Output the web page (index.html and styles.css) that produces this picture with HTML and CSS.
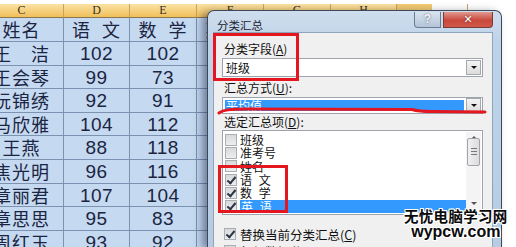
FILE: index.html
```html
<!DOCTYPE html>
<html lang="zh">
<head>
<meta charset="utf-8">
<link rel="stylesheet" href="styles.css">
</head>
<body>
<div class="hdr">
  <div class="hc w84">C</div><div class="hc w66">D</div><div class="hc w67">E</div><div class="hc w67">F</div><div class="hc w67">G</div><div class="hc w66">H</div><div class="hc fade w71"></div><div class="hc blank w60"></div>
</div>
<div class="sheet">
  <div class="c cn">姓名</div><div class="c cn sp">语 文</div><div class="c cn sp">数 学</div><div class="c cn sp">英 语</div><div class="c"></div>
  <div class="c cn">王　洁</div><div class="c">102</div><div class="c">102</div><div class="c"></div><div class="c"></div>
  <div class="c cn">王会琴</div><div class="c">99</div><div class="c">73</div><div class="c"></div><div class="c"></div>
  <div class="c cn">阮锦绣</div><div class="c">92</div><div class="c">91</div><div class="c"></div><div class="c"></div>
  <div class="c cn">马欣雅</div><div class="c">104</div><div class="c">112</div><div class="c"></div><div class="c"></div>
  <div class="c cn">王燕</div><div class="c">88</div><div class="c">118</div><div class="c"></div><div class="c"></div>
  <div class="c cn">焦光明</div><div class="c">96</div><div class="c">116</div><div class="c"></div><div class="c"></div>
  <div class="c cn">章丽君</div><div class="c">107</div><div class="c">104</div><div class="c"></div><div class="c"></div>
  <div class="c cn">章思思</div><div class="c">95</div><div class="c">83</div><div class="c"></div><div class="c"></div>
  <div class="c cn">周红玉</div><div class="c">93</div><div class="c">92</div><div class="c"></div><div class="c"></div>
</div>

<div class="dlg">
  <div class="titlebar">
    <span class="title">分类汇总</span>
    <div class="btns"><div class="help">?</div><div class="close">✕</div></div>
  </div>
  <div class="client">
    <div class="lbl">分类字段(<u>A</u>)</div>
    <div class="combo"><span class="val">班级</span><span class="dd"></span></div>
    <div class="lbl l2">汇总方式(<u>U</u>):</div>
    <div class="combo c2"><span class="val sel">平均值</span><span class="dd"></span></div>
    <div class="lbl l3">选定汇总项(<u>D</u>):</div>
    <div class="list">
      <div class="items">
        <div class="item"><span class="cb"></span><span>班级</span></div>
        <div class="item"><span class="cb"></span><span>准考号</span></div>
        <div class="item"><span class="cb"></span><span>姓名</span></div>
        <div class="item"><span class="cb on"></span><span>语 文</span></div>
        <div class="item"><span class="cb on"></span><span>数 学</span></div>
        <div class="item"><span class="cb on"></span><span class="hl">英 语</span></div>
      </div>
      <div class="sb"><span class="up"></span><span class="thumb"><i></i><i></i><i></i></span><span class="down"></span></div>
    </div>
    <div class="opt"><span class="cb on"></span><span>替换当前分类汇总(<u>C</u>)</span></div>
    <div class="opt"><span class="cb"></span><span>每组数据分页(<u>P</u>)</span></div>
  </div>
  <div class="mark m1"></div>
  <svg class="redline" width="270" height="10" viewBox="0 0 270 10"><path d="M2 6 C 6 3, 12 2, 30 2 L 195 2.5 C 200 4, 205 4.5, 215 4.5 L 268 5" fill="none" stroke="#e4161f" stroke-width="3" stroke-linecap="round"/></svg>
  <div class="mark m2"></div>
</div>

<div class="wm">
  <div class="wm1">无忧电脑学习网</div>
  <div class="wm2">wypcw.com</div>
</div>
</body>
</html>
```
FILE: styles.css
```css
* { box-sizing: border-box; margin: 0; padding: 0; }
html, body { width: 516px; height: 247px; overflow: hidden; background: #fff; }
body { position: relative; font-family: "Noto Sans CJK SC", sans-serif; }

.hdr { display: flex; margin-left: -20px; margin-top: 4px; height: 14px; }
.hc { flex: none; height: 14px; background: linear-gradient(#fbe2a4, #f0bf5a); border-right: 1px solid #c8a45a; border-bottom: 1px solid #8a784c; font: 12px/13px "Liberation Serif", serif; color: #3a3020; text-align: center; }
.hc.fade { background: linear-gradient(to right, #f3ca72 0 35px, #fff 35px); border-bottom-color: transparent; }
.hc.blank { background: #fff; border: 0; }
.w84 { width: 84px; } .w66 { width: 66px; } .w67 { width: 67px; } .w71 { width: 71px; } .w60 { width: 60px; }

.sheet { display: grid; grid-template-columns: 84px 66px 67px 67px 67px; grid-template-rows: 24px repeat(9, 23.6px); margin-left: -20px; width: 351px; }
.c { background: #c5d9f1; border-right: 1px solid #7d91b1; border-bottom: 1px solid #7d91b1; color: #1b2542; font: 19px/23px "Liberation Sans Narrow", "Liberation Sans", sans-serif; letter-spacing: 0.4px; text-align: center; white-space: nowrap; overflow: hidden; }
.c.cn { font-family: "Noto Sans CJK SC", sans-serif; font-size: 18px; letter-spacing: 1px; }
.c.sp { word-spacing: 6px; }

.dlg { position: absolute; left: 207px; top: 10px; width: 295px; height: 237px; border: 1px solid #3d4858; border-bottom: 0; border-radius: 7px 7px 0 0; background: linear-gradient(180deg, #cfdeee 0, #bfd3e8 30px, #b7cce3 100%); box-shadow: -5px 2px 8px rgba(10, 20, 50, 0.45); padding: 0 8px 0 5px; display: flex; flex-direction: column; }
.titlebar { height: 21px; flex: none; display: flex; align-items: flex-start; justify-content: space-between; }
.title { font-size: 11.5px; line-height: 14px; color: #1d232c; margin: 7px 0 0 4px; }
.btns { display: flex; gap: 2px; margin-top: 1px; }
.help { width: 27px; height: 16px; border: 1px solid #6d7c92; border-top: 0; border-radius: 0 0 0 4px; background: linear-gradient(#d8e3ef, #b4c4d8); color: #f4f6f9; font: bold 12px/15px "Liberation Sans", sans-serif; text-align: center; text-shadow: 0 0 2px #4a5a70; }
.close { width: 50px; height: 16px; border: 1px solid #7a3a36; border-top: 0; border-radius: 0 0 4px 0; background: linear-gradient(#e19a8f, #c9493c 55%, #d0574a); color: #fff; font: bold 11px/15px "DejaVu Sans", sans-serif; text-align: center; text-shadow: 0 0 2px #5a1a14; }

.client { flex: 1; min-height: 0; overflow: hidden; background: #f0f0f0; border: 1px solid #8ea3bc; border-bottom: 0; padding: 9px 9px 0 8px; font-size: 12px; color: #111; }
.lbl { height: 14px; line-height: 14px; padding-left: 2px; white-space: nowrap; }
.lbl u { text-decoration: underline; text-underline-offset: 1px; }
.combo { margin-top: 2px; height: 19px; background: #fff; border: 1px solid #9fa4ac; display: flex; align-items: center; justify-content: space-between; padding: 0 1px 0 2px; }
.val { line-height: 13px; padding: 0 1px; font-size: 12px; }
.dd { width: 15px; height: 15px; border: 1px solid #a4a9b0; background: linear-gradient(#f4f4f4, #dcdcdc); position: relative; }
.dd::after { content: ""; position: absolute; left: 4px; top: 5px; border-left: 3px solid transparent; border-right: 3px solid transparent; border-top: 3px solid #111; }
.l2 { margin-top: 4px; }
.combo.c2 { height: 17px; }
.val.sel { background: #3399ff; color: #fff; flex: 1; margin-right: 2px; height: 11px; line-height: 11px; }
.l3 { margin-top: 1px; }
.list { margin-top: 1px; height: 85px; background: #fff; border: 1px solid #9fa4ac; display: flex; padding: 1px 1px 1px 2px; }
.items { flex: 1; padding-top: 1px; }
.item { height: 13.3px; display: flex; align-items: center; gap: 3px; line-height: 13px; font-size: 12px; word-spacing: 4px; }
.cb { width: 12px; height: 12px; flex: none; border: 1px solid #a9adb4; background: linear-gradient(#d9d9d9, #eeeeee); position: relative; }
.cb.on::after { content: ""; position: absolute; left: 3px; top: 0px; width: 3px; height: 7px; border-right: 2px solid #2a3546; border-bottom: 2px solid #2a3546; transform: rotate(40deg); }
.hl { background: #3399ff; color: #fff; flex: 1; padding-left: 1px; height: 13px; }
.sb { width: 15px; flex: none; display: flex; flex-direction: column; justify-content: space-between; align-items: center; background: #f4f4f4; padding: 4px 0; }
.up, .down { width: 0; height: 0; border-left: 3px solid transparent; border-right: 3px solid transparent; }
.up { border-bottom: 3px solid #555; }
.down { border-top: 3px solid #555; margin-bottom: 4px; }
.thumb { width: 13px; height: 28px; margin-top: -38px; border: 1px solid #a0a4aa; border-radius: 2px; background: linear-gradient(to right, #f0f0f0, #dcdcdc); display: flex; flex-direction: column; align-items: center; justify-content: center; gap: 2px; }
.thumb i { width: 6px; height: 1px; background: #777; }
.opt { display: flex; align-items: center; gap: 4px; height: 14px; margin-top: 12px; padding-left: 2px; font-size: 12.5px; white-space: nowrap; }
.opt + .opt { margin-top: 3px; }

.mark { position: absolute; border: 3px solid #e4161f; }
.m1 { left: 5px; top: 22px; width: 86px; height: 48px; }
.m2 { left: 10px; top: 154px; width: 70px; height: 48px; }
.redline { position: absolute; left: 9px; top: 96px; }

.wm { position: absolute; left: 404px; top: 208px; color: #0a0a0a; font-weight: bold; text-align: center; text-shadow: 1px 0 0 #fff, -1px 0 0 #fff, 0 1px 0 #fff, 0 -1px 0 #fff, 1px 1px 0 #fff, -1px -1px 0 #fff, 1px -1px 0 #fff, -1px 1px 0 #fff; }
.wm1 { font-family: "Noto Sans CJK SC", sans-serif; font-size: 14.5px; line-height: 16px; letter-spacing: 0.3px; white-space: nowrap; }
.wm2 { font-family: "Liberation Sans", sans-serif; font-size: 16px; line-height: 16px; }
```
